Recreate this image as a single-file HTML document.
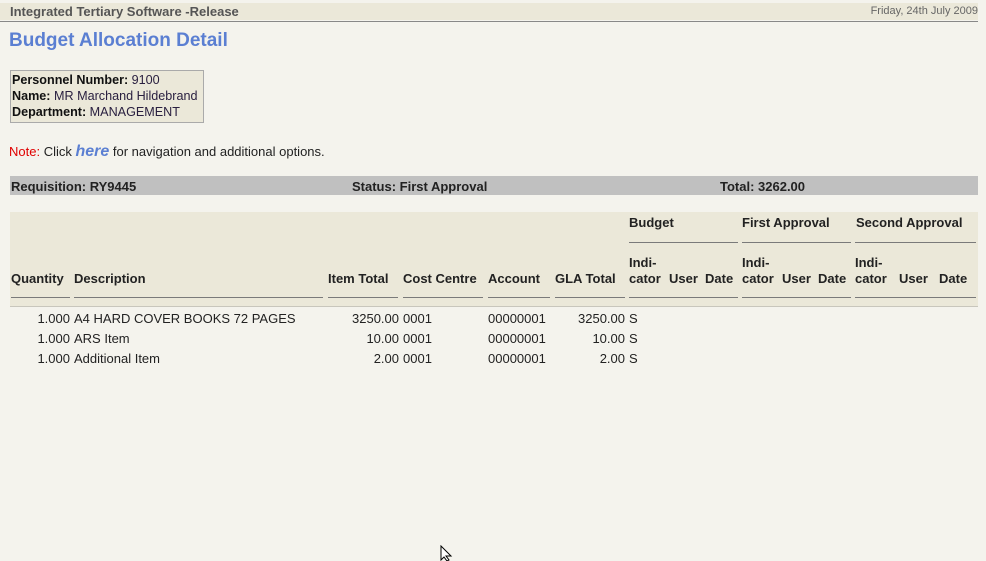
<!DOCTYPE html>
<html><head><meta charset="utf-8"><style>
body{margin:0;width:986px;height:560px;background:#f4f3ed;font-family:"Liberation Sans",Arial,sans-serif;font-size:13px;color:#222;position:relative;overflow:hidden}
.a{position:absolute;white-space:nowrap}
.b{font-weight:bold}
.l{position:absolute;height:1px;background:#7a7a7a;top:297px}
.g{position:absolute;height:1px;background:#7a7a7a;top:242px}
.r{text-align:right}
</style></head><body>
<div class="a" style="left:0;top:3px;width:978px;height:17px;background:#ebe8d9"></div>
<div class="a b" style="left:10px;top:4px;font-size:13px;color:#555">Integrated Tertiary Software -Release</div>
<div class="a" style="right:8px;top:5px;font-size:11px;color:#666">Friday, 24th July 2009</div>
<div class="a" style="left:0;top:21px;width:978px;height:1px;background:#888"></div>
<div class="a b" style="left:9px;top:30px;font-size:19px;color:#5b7fd2">Budget Allocation Detail</div>
<div class="a" style="left:10px;top:70px;width:192px;height:51px;background:#ebe8d9;border:1px solid #aaa"></div>
<div class="a" style="left:12px;top:72px;line-height:16px;font-size:12.6px;color:#2a2040"><b style="color:#111">Personnel Number:</b> 9100<br><b style="color:#111">Name:</b> MR Marchand Hildebrand<br><b style="color:#111">Department:</b> MANAGEMENT</div>
<div class="a" style="left:9px;top:143px"><span style="color:#e00000">Note:</span> Click <b style="color:#5b7fd2;font-style:italic;font-size:16px">here</b> for navigation and additional options.</div>
<div class="a" style="left:10px;top:176px;width:968px;height:19px;background:#c0c0c0"></div>
<div class="a b" style="left:11px;top:179px">Requisition: RY9445</div>
<div class="a b" style="left:352px;top:179px">Status: First Approval</div>
<div class="a b" style="left:720px;top:179px">Total: 3262.00</div>
<div class="a" style="left:10px;top:212px;width:968px;height:94px;background:#ebe8d9"></div>
<div class="a" style="left:10px;top:306px;width:968px;height:1px;background:#c8c6bc"></div>
<div class="a b" style="left:629px;top:215px">Budget</div>
<div class="a b" style="left:742px;top:215px">First Approval</div>
<div class="a b" style="left:856px;top:215px">Second Approval</div>
<div class="g" style="left:629px;width:109px"></div>
<div class="g" style="left:742px;width:109px"></div>
<div class="g" style="left:855px;width:121px"></div>
<div class="a b" style="left:11px;top:271px">Quantity</div>
<div class="a b" style="left:74px;top:271px">Description</div>
<div class="a b" style="left:328px;top:271px">Item Total</div>
<div class="a b" style="left:403px;top:271px">Cost Centre</div>
<div class="a b" style="left:488px;top:271px">Account</div>
<div class="a b" style="left:555px;top:271px">GLA Total</div>
<div class="a b" style="left:629px;top:255px;line-height:16px">Indi-<br>cator</div>
<div class="a b" style="left:669px;top:271px">User</div>
<div class="a b" style="left:705px;top:271px">Date</div>
<div class="a b" style="left:742px;top:255px;line-height:16px">Indi-<br>cator</div>
<div class="a b" style="left:782px;top:271px">User</div>
<div class="a b" style="left:818px;top:271px">Date</div>
<div class="a b" style="left:855px;top:255px;line-height:16px">Indi-<br>cator</div>
<div class="a b" style="left:899px;top:271px">User</div>
<div class="a b" style="left:939px;top:271px">Date</div>
<div class="l" style="left:11px;width:59px"></div>
<div class="l" style="left:74px;width:249px"></div>
<div class="l" style="left:328px;width:70px"></div>
<div class="l" style="left:403px;width:80px"></div>
<div class="l" style="left:488px;width:62px"></div>
<div class="l" style="left:555px;width:70px"></div>
<div class="l" style="left:629px;width:109px"></div>
<div class="l" style="left:742px;width:109px"></div>
<div class="l" style="left:855px;width:121px"></div>
<div class="a r" style="left:10px;width:60px;top:309px;line-height:20px">1.000<br>1.000<br>1.000</div>
<div class="a" style="left:74px;top:309px;line-height:20px">A4 HARD COVER BOOKS 72 PAGES<br>ARS Item<br>Additional Item</div>
<div class="a r" style="left:328px;width:71px;top:309px;line-height:20px">3250.00<br>10.00<br>2.00</div>
<div class="a" style="left:403px;top:309px;line-height:20px">0001<br>0001<br>0001</div>
<div class="a" style="left:488px;top:309px;line-height:20px">00000001<br>00000001<br>00000001</div>
<div class="a r" style="left:555px;width:70px;top:309px;line-height:20px">3250.00<br>10.00<br>2.00</div>
<div class="a" style="left:629px;top:309px;line-height:20px">S<br>S<br>S</div>
<svg class="a" style="left:440px;top:545px" width="14" height="16"><path d="M1 1 L1 15 L4 12 L7 16 L9 15 L6 11 L11 11 Z" fill="#fff" stroke="#000"/></svg>
</body></html>
